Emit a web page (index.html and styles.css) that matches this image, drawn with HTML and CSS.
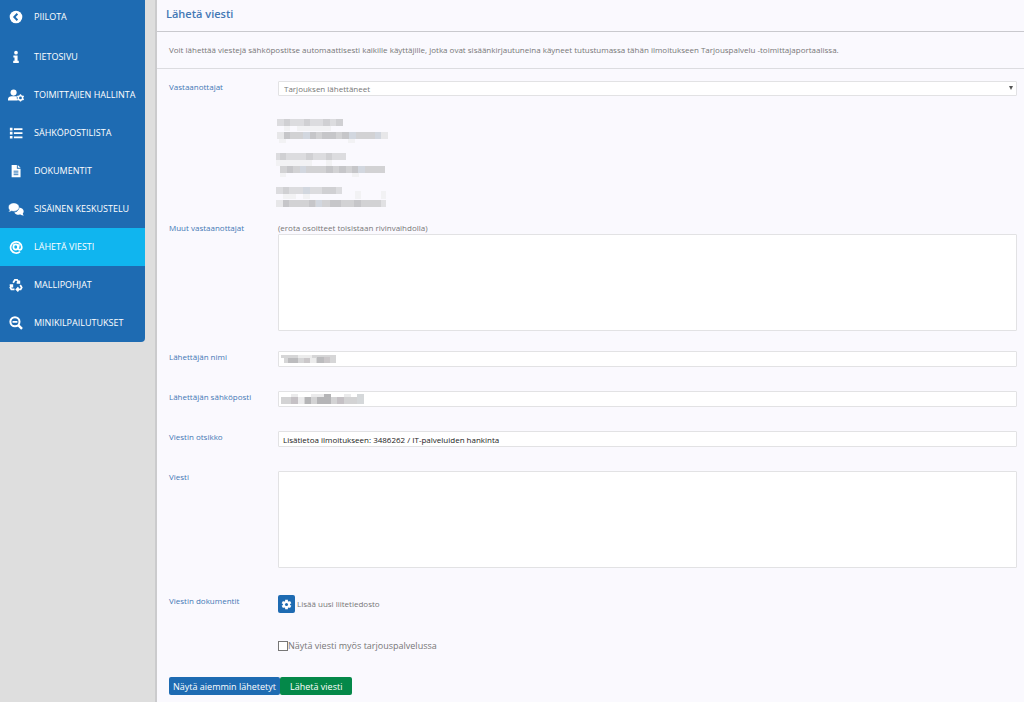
FILE: index.html
```html
<!DOCTYPE html>
<html lang="fi">
<head>
    <meta charset="UTF-8">
    <meta name="viewport" content="width=device-width, initial-scale=1.0">
    <title>Lähetä viesti</title>
    <link rel="stylesheet" href="styles.css">
</head>
<body>
    <aside class="side">
        <nav class="menu">
            <a href="#" class="first">
                <svg viewBox="0 0 16 16"><circle cx="8" cy="8" r="7.2" fill="#fff"/><path d="M9.6 4.3 6 8l3.6 3.7" fill="none" stroke="#1e6bb2" stroke-width="2.2"/></svg>
                <span>PIILOTA</span>
            </a>
            <a href="#">
                <svg viewBox="0 0 16 16"><circle cx="8" cy="3" r="2.1" fill="#fff"/><path d="M5 6.2h4.8v6.2h1.4v2.4H4.8v-2.4h1.5V8.5H5z" fill="#fff"/></svg>
                <span>TIETOSIVU</span>
            </a>
            <a href="#">
                <svg viewBox="0 0 20 16"><circle cx="7" cy="5" r="3.8" fill="#fff"/><path d="M0 15v-1.6C0 11 2 9.6 4.4 9.6h5c.8 0 1.2.1 1.8.4-.5 1.8-.2 3.6 1 5z" fill="#fff"/><circle cx="15.6" cy="11.6" r="2.7" fill="none" stroke="#fff" stroke-width="1.9"/><path d="M15.6 7v2M15.6 14.2v2M11.6 9.3l1.8 1M17.8 12.9l1.8 1M11.6 13.9l1.8-1M17.8 10.3l1.8-1" stroke="#fff" stroke-width="1.7"/></svg>
                <span>TOIMITTAJIEN HALLINTA</span>
            </a>
            <a href="#">
                <svg viewBox="0 0 16 16"><path d="M1 2h3v3H1zM1 6.7h3v3H1zM1 11.4h3v3H1zM5.6 2.5h9.8v2H5.6zM5.6 7.2h9.8v2H5.6zM5.6 11.9h9.8v2H5.6z" fill="#fff"/></svg>
                <span>SÄHKÖPOSTILISTA</span>
            </a>
            <a href="#">
                <svg viewBox="0 0 16 16"><path d="M3 1h6v4.3h4.2V15H3z" fill="#fff"/><path d="m10 1 3.3 3.4H10z" fill="#fff"/><path d="M5.3 8.2h5.4M5.3 10.2h5.4M5.3 12.2h5.4" stroke="#1e6bb2"/></svg>
                <span>DOKUMENTIT</span>
            </a>
            <a href="#">
                <svg viewBox="0 0 18 16"><path d="M12.500 6.200c3.200.2 5.300 2 5.300 4.500 0 1-.4 1.900-1.100 2.600.3.800.8 1.500 1.300 2.100-1.500.1-2.800-.3-3.900-1-3.200.6-6-.4-7-2.500 3.200-.500 5.400-2.600 5.400-5.700z" fill="#fff"/><path d="M6.500 1c3.500 0 6.200 2.100 6.200 4.900s-2.700 4.900-6.200 4.900c-.9 0-1.700-.1-2.500-.4-1.100.8-2.400 1.200-3.900 1.100.7-.7 1.200-1.400 1.500-2.200C.7 8.400.3 7.200.3 5.900.3 3.100 3 1 6.500 1z" fill="#fff" stroke="#1e6bb2" stroke-width=".6"/></svg>
                <span>SISÄINEN KESKUSTELU</span>
            </a>
            <a href="#" class="on">
                <svg viewBox="0 0 16 16" fill="none" stroke="#fff" stroke-width="2"><path d="M12.600 13.200A6.400 6.400 0 1 1 14.600 8c0 2.300-1 3.300-2.300 3.300S10.500 10.300 10.700 9l.7-4.100"/><ellipse cx="7.700" cy="8" rx="2.700" ry="2.900"/></svg>
                <span>LÄHETÄ VIESTI</span>
            </a>
            <a href="#">
                <svg viewBox="0 0 16 16" fill="none" stroke="#fff" stroke-width="2"><path d="M4.700 5.400 6.700 2.200h2.600l2 3.200M8.800 5.600h3V2.800M12.800 8l1.700 2.800-1.200 2.200H9.200M10.800 10.800 8.600 13l2.200 2.200M6.300 13H2.700L1.500 10.800 3.200 8M.8 8h3v2.800"/></svg>
                <span>MALLIPOHJAT</span>
            </a>
            <a href="#">
                <svg viewBox="0 0 16 16" fill="none" stroke="#fff"><circle cx="6.800" cy="6.600" r="5.200" stroke-width="2.300"/><path d="M4 6.600h5.600" stroke-width="2"/><path d="m10.500 10.300 4.400 4.400" stroke-width="2.800"/></svg>
                <span>MINIKILPAILUTUKSET</span>
            </a>
        </nav>
    </aside>

    <main class="content">
        <h1>Lähetä viesti</h1>
        <p class="info">Voit lähettää viestejä sähköpostitse automaattisesti kaikille käyttäjille, jotka ovat sisäänkirjautuneina käyneet tutustumassa tähän ilmoitukseen Tarjouspalvelu -toimittajaportaalissa.</p>

        <form class="form">
            <div class="row recipients">
                <label for="recipients">Vastaanottajat</label>
                <div class="field">
                    <div class="select">
                        <select id="recipients">
                            <option>Tarjouksen lähettäneet</option>
                        </select>
                    </div>
                    <!-- hidden names and addresses -->
                    <svg class="people" width="114" height="92" viewBox="0 0 114 92" shape-rendering="crispEdges">
                        <g fill="#dcdcdf">
                            <path d="M1 3h66v7H1zM0 37h70v7H0zM0 71h66v7H0z"/>
                        </g>
                        <g fill="#d0d0d3">
                            <path d="M8 3h6v7H8zM28 3h6v7h-6zM47 3h7v7h-7zM60 3h7v7h-7zM4 37h6v7H4zM30 37h7v7h-7zM50 37h6v7h-6zM7 71h6v7H7zM27 71h7v7h-7zM46 71h14v7H46z"/>
                        </g>
                        <g fill="#f2f2f4">
                            <path d="M8 10h6v5H8zM21 10h34v5H21zM0 44h36v6H0zM50 44h6v6h-6zM7 78h13v5H7zM27 78h7v5h-7zM79 75h6v8h-6zM105 75h5v8h-5zM3 23h7v4H3zM72 23h7v4h-7zM4 57h6v4H4zM76 57h7v4h-7z"/>
                        </g>
                        <g fill="#e7e7e9">
                            <path d="M1 16h7v7H1zM105 16h7v7h-7zM0 84h7v7H0z"/>
                        </g>
                        <g fill="#d2d2d4">
                            <path d="M8 16h91v7H8zM4 50h105v7H4zM7 84h98v7H7z"/>
                        </g>
                        <g fill="#c6c6c9">
                            <path d="M8 16h6v7H8zM34 16h6v7h-6zM46 16h14v7H46zM66 16h7v7h-7zM11 50h6v7h-6zM50 50h7v7h-7zM63 50h7v7h-7zM76 50h7v7h-7zM7 84h6v7H7zM33 84h6v7h-6zM54 84h11v7H54zM78 84h7v7h-7z"/>
                        </g>
                        <g fill="#d2d7df">
                            <path d="M27 16h7v7h-7zM73 16h7v7h-7zM99 16h6v7h-6zM24 50h6v7h-6zM82 50h7v7h-7zM27 71h7v7h-7zM40 84h6v7h-6z"/>
                        </g>
                        <path d="M105 84h5v7h-5z" fill="#e1e1e3"/>
                    </svg>
                </div>
            </div>
            <div class="row others">
                <label for="others">Muut vastaanottajat</label>
                <div class="field">
                    <p class="hint">(erota osoitteet toisistaan rivinvaihdolla)</p>
                    <textarea id="others"></textarea>
                </div>
            </div>
            <div class="row">
                <label for="name">Lähettäjän nimi</label>
                <div class="field">
                    <input type="text" id="name">
                    <svg class="hidden_value" width="56" height="10" viewBox="0 0 56 10" shape-rendering="crispEdges">
                        <path d="M0 1h55v8H3V4H0z" fill="#d6d6d7"/>
                        <path d="M7 4h10v5H7zM36 3h7v6h-7z" fill="#bcbcbe"/>
                        <path d="M23 4h6v5h-6zM43 3h6v6h-6z" fill="#cbc8ca"/>
                        <path d="M17 1h14v3H17zM29 4h6v5h-6z" fill="#ececec"/>
                    </svg>
                </div>
            </div>
            <div class="row">
                <label for="email">Lähettäjän sähköposti</label>
                <div class="field">
                    <input type="text" id="email">
                    <svg class="hidden_value" width="84" height="10" viewBox="0 0 84 10" shape-rendering="crispEdges">
                        <path d="M0 3h83v7H0z" fill="#d3d3d4"/>
                        <path d="M10 0h7v3h-7zM30 0h20v3H30zM63 0h7v3h-7zM17 3h6v7h-6z" fill="#ebebec"/>
                        <path d="M24 3h6v7h-6zM36 3h7v7h-7zM43 0h7v10h-7z" fill="#b5b5b7"/>
                        <path d="M10 3h7v7h-7zM56 3h7v7h-7z" fill="#c5c1c5"/>
                        <path d="M76 0h7v10h-7z" fill="#d5d8da"/>
                    </svg>
                </div>
            </div>
            <div class="row">
                <label for="subject">Viestin otsikko</label>
                <div class="field">
                    <input type="text" id="subject" value="Lisätietoa ilmoitukseen: 3486262 / IT-palveluiden hankinta">
                </div>
            </div>
            <div class="row message">
                <label for="message">Viesti</label>
                <div class="field">
                    <textarea id="message"></textarea>
                </div>
            </div>
            <div class="row docs">
                <label for="attach">Viestin dokumentit</label>
                <div class="field attach">
                    <button type="button" id="attach" class="gear" aria-label="Lisää uusi liitetiedosto">
                        <svg viewBox="0 0 16 16"><path d="M8 1v14M1.900 4.500l12.200 7M1.900 11.500l12.200-7" stroke="#fff" stroke-width="4"/><circle cx="8" cy="8" r="5.200" fill="#fff"/><circle cx="8" cy="8" r="2.200" fill="#1e6bb2"/></svg>
                    </button>
                    <span>Lisää uusi liitetiedosto</span>
                </div>
            </div>
            <div class="row show">
                <div class="field check">
                    <input type="checkbox" id="show">
                    <label for="show">Näytä viesti myös tarjouspalvelussa</label>
                </div>
            </div>
            <div class="buttons">
                <button type="button" class="btn">Näytä aiemmin lähetetyt</button>
                <button type="submit" class="btn send">Lähetä viesti</button>
            </div>
        </form>
    </main>
</body>
</html>
```
FILE: styles.css
```css
* {margin: 0; padding: 0; box-sizing: border-box;}
body {
    display: flex;
    min-height: 100vh;
    background: #dedede;
    font-family: "Open Sans", sans-serif;
    font-size: 8px;
    line-height: 12px;
    color: #777;
}
button, input, select, textarea {
    font-family: inherit;
    font-size: 8px;
}

/* sidebar */
.side {
    width: 157px;
    flex-shrink: 0;
    padding-right: 10px;
    border-right: 2px solid #cbcbcd;
}
.menu {
    background: #1e6bb2;
    border-radius: 0 0 4px 0;
    overflow: hidden;
}
.menu a {
    display: flex;
    align-items: center;
    gap: 10px;
    height: 38px;
    padding-left: 8px;
    color: #fff;
    font-size: 9px;
    text-decoration: none;
    white-space: nowrap;
}
.menu a.first {padding-bottom: 4px;}
.menu a.on {background: #10b5ef;}
.menu svg {
    width: 16px;
    height: 14px;
}

/* content */
.content {
    flex: 1;
    min-width: 0;
    background: #faf9fe;
}
h1 {
    height: 32px;
    padding-left: 9px;
    border-bottom: 1px solid #c9c9ce;
    font-size: 11px;
    line-height: 27px;
    font-weight: 600;
    color: #4478b5;
}
.info {
    padding: 12px;
    border-bottom: 1px solid #dcdce0;
}
.form {padding: 12px 7px 6px 12px;}
.row {
    display: flex;
    min-height: 40px;
}
.row > label {
    width: 109px;
    flex-shrink: 0;
    color: #4478b5;
}
.field {
    flex: 1;
    position: relative;
}
.field input[type="text"], textarea, select {
    display: block;
    width: 100%;
    background: #fff;
    border: 1px solid #e2e2e4;
    border-radius: 1px;
    color: #222;
}
.field input[type="text"] {
    height: 16px;
    padding: 0 4px;
}
.hidden_value {
    position: absolute;
    top: 3px;
    left: 3px;
}
.recipients {height: 141px;}
.select {position: relative;}
.select::after {
    content: "";
    position: absolute;
    top: 5px;
    right: 4px;
    border: 2px solid transparent;
    border-top: 4px solid #555;
    border-bottom: 0;
}
select {
    height: 15px;
    padding: 0 5px;
    appearance: none;
    color: #777;
}
.people {
    display: block;
    margin: 20px 0 0 -2px;
}
.others {height: 129px;}
textarea {
    height: 97px;
    resize: none;
}
.message {height: 124px;}
.attach {
    display: flex;
    align-items: center;
    gap: 2px;
    height: 18px;
}
.gear {
    width: 17px;
    height: 18px;
    padding: 3px;
    background: #1e6bb2;
    border: 0;
    border-radius: 2px;
}
.gear svg {
    display: block;
    width: 11px;
    height: 11px;
}
.docs {height: 45px;}
.show {min-height: 37px;}
.check {
    display: flex;
    align-items: center;
    height: 12px;
    margin-left: 109px;
    font-size: 9px;
}
.check input {
    width: 10px;
    height: 10px;
    appearance: none;
    background: #fff;
    border: 1px solid #777;
}
.buttons {
    display: flex;
}
.btn {
    height: 18px;
    padding: 0 4px;
    background: #1e6bb2;
    border: 0;
    border-radius: 2px;
    color: #fff;
    font-size: 9px;
}
.btn.send {
    padding: 0 10px;
    background: #048849;
}
```
